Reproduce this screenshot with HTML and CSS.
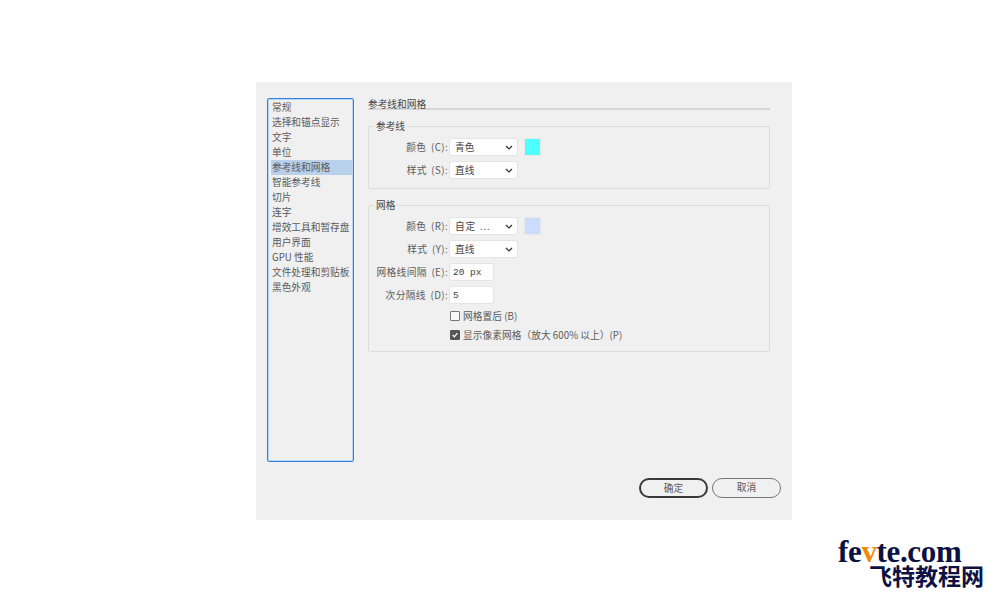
FILE: index.html
```html
<!DOCTYPE html>
<html lang="zh">
<head>
<meta charset="utf-8">
<title>参考线和网格</title>
<link rel="stylesheet" href="styles.css">
</head>
<body>
<div class="dialog">
  <div class="top">
    <ul class="nav">
      <li>常规</li>
      <li>选择和锚点显示</li>
      <li>文字</li>
      <li>单位</li>
      <li class="active">参考线和网格</li>
      <li>智能参考线</li>
      <li>切片</li>
      <li>连字</li>
      <li>增效工具和暂存盘</li>
      <li>用户界面</li>
      <li>GPU 性能</li>
      <li>文件处理和剪贴板</li>
      <li>黑色外观</li>
    </ul>
    <div class="main">
      <div class="title">参考线和网格</div>
      <fieldset class="group guides">
        <legend>参考线</legend>
        <div class="row">
          <span class="label">颜色 (C):</span>
          <span class="select">青色<svg class="chev" viewBox="0 0 8 5"><path d="M1 1l3 3 3-3"/></svg></span>
          <span class="swatch cyan"></span>
        </div>
        <div class="row">
          <span class="label">样式 (S):</span>
          <span class="select">直线<svg class="chev" viewBox="0 0 8 5"><path d="M1 1l3 3 3-3"/></svg></span>
        </div>
      </fieldset>
      <fieldset class="group grid">
        <legend>网格</legend>
        <div class="row">
          <span class="label">颜色 (R):</span>
          <span class="select"><span class="custom">自定 ...</span><svg class="chev" viewBox="0 0 8 5"><path d="M1 1l3 3 3-3"/></svg></span>
          <span class="swatch blue"></span>
        </div>
        <div class="row">
          <span class="label">样式 (Y):</span>
          <span class="select">直线<svg class="chev" viewBox="0 0 8 5"><path d="M1 1l3 3 3-3"/></svg></span>
        </div>
        <div class="row">
          <span class="label">网格线间隔 (E):</span>
          <span class="input">20 px</span>
        </div>
        <div class="row">
          <span class="label">次分隔线 (D):</span>
          <span class="input">5</span>
        </div>
        <div class="check first"><span class="box"></span>网格置后 (B)</div>
        <div class="check"><span class="box on"><svg viewBox="0 0 10 10"><path d="M2 5l2.2 2.3L8 2.6"/></svg></span>显示像素网格（放大 600% 以上）(P)</div>
      </fieldset>
    </div>
  </div>
  <div class="actions">
    <span class="btn primary">确定</span>
    <span class="btn">取消</span>
  </div>
</div>
<div class="mark">
  <div class="mark-en">fe<span class="v">v</span>te.com</div>
  <div class="mark-cn">飞特教程网</div>
</div>
</body>
</html>
```
FILE: styles.css
```css
* { box-sizing: border-box; }
html, body { margin: 0; padding: 0; }
body {
  width: 1000px;
  height: 601px;
  background: #fff;
  overflow: hidden;
  padding: 82px 0 0 256px;
  position: relative;
  font-family: "Noto Sans CJK SC", "Liberation Sans", sans-serif;
  font-size: 9.7px;
  color: #5a5a5a;
}
.dialog {
  width: 536px;
  height: 438px;
  background: #f0f0f0;
  padding: 16px 11px 0;
}
.top { display: flex; gap: 14px; height: 364px; }
.nav {
  list-style: none;
  margin: 0;
  padding: 1px 0 0 3px;
  width: 87px;
  height: 364px;
  background: #f0f0f0;
  border: 1px solid #2f86e0;
  border-radius: 2px;
  box-shadow: inset 0 0 0 1px #b5d2f0;
}
.nav li {
  height: 15px;
  line-height: 15px;
  padding-left: 1px;
  margin-right: 1px;
  white-space: nowrap;
}
.nav .active { background: #b9d0ea; }
.main { width: 402px; }
.title {
  height: 12px;
  line-height: 12px;
  color: #444;
  border-bottom: 2px solid #d6d6d6;
}
.group {
  margin: 0;
  padding: 0;
  border: 1px solid #dcdcdc;
  border-radius: 2px;
  min-width: 0;
}
.group legend {
  margin-left: 5px;
  padding: 0 2px;
  line-height: 12px;
  height: 12px;
  color: #444;
}
.guides { height: 69px; margin-top: 10px; padding-top: 7px; }
.grid { height: 153px; margin-top: 10px; padding-top: 7px; }
.row { display: flex; align-items: center; height: 16px; margin-bottom: 7px; }
.label {
  width: 79px;
  margin-right: 2px;
  text-align: right;
  white-space: nowrap;
  letter-spacing: 0.4px;
  word-spacing: 2px;
}
.select, .input {
  display: flex;
  align-items: center;
  height: 16px;
  background: #fff;
  border-radius: 2px;
  box-shadow: 0 0 0 1px #e4e4e4;
  padding-left: 5px;
  color: #444;
}
.select { width: 67px; justify-content: space-between; padding-right: 4px; }
.custom { letter-spacing: 0.8px; word-spacing: 1px; }
.input { width: 43px; padding-left: 3px; font-family: "Liberation Mono", "Noto Sans CJK SC", monospace; font-size: 9.5px; }
.chev { width: 8px; height: 5px; fill: none; stroke: #333; stroke-width: 1.2; }
.swatch {
  width: 15px;
  height: 16px;
  margin-left: 8px;
  box-shadow: 0 0 0 1px #e8e8e8;
}
.cyan { background: #4effff; }
.blue { background: #ccdcff; }
.check {
  display: flex;
  align-items: center;
  height: 12px;
  margin-left: 81px;
  margin-bottom: 7px;
  white-space: nowrap;
  letter-spacing: 0.05px;
}
.check.first { margin-top: 7px; }
.box {
  width: 10px;
  height: 10px;
  margin-right: 3px;
  border: 1px solid #777;
  border-radius: 1px;
  background: #f8f8f8;
  flex: none;
}
.box.on { background: #555; border-color: #555; }
.box svg { display: block; width: 8px; height: 8px; fill: none; stroke: #fff; stroke-width: 1.6; }
.actions {
  display: flex;
  justify-content: flex-end;
  gap: 4px;
  margin-top: 16px;
}
.btn {
  width: 69px;
  height: 20px;
  line-height: 17px;
  text-align: center;
  border: 1.5px solid #777;
  border-radius: 10px;
}
.primary { border: 2px solid #3a3a3a; line-height: 16px; }
.mark {
  position: absolute;
  left: 838px;
  top: 539px;
  color: #0d1242;
  font-weight: 700;
}
.mark-en {
  font-family: "Liberation Serif", serif;
  font-size: 31px;
  line-height: 26px;
  letter-spacing: -0.35px;
}
.v { color: #f08a0c; }
.mark-cn {
  margin-left: 31px;
  font-family: "Noto Sans CJK SC", sans-serif;
  font-size: 23px;
  line-height: 20px;
  white-space: nowrap;
}
```
